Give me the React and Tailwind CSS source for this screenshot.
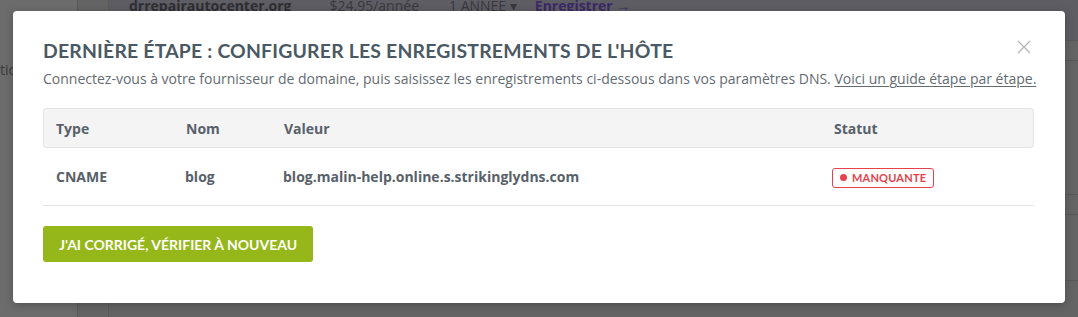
import React from "react";

export default function App() {
  return (
    <div className="relative w-[1078px] h-[317px] overflow-hidden bg-[#646464]" style={{ fontFamily: "'Open Sans', sans-serif" }}>
      {/* background page under overlay */}
      <div className="absolute inset-0 flex">
        <div className="w-[78px] h-full bg-[#6c6c6c] border-r border-[#5a5a5a] flex flex-col">
          <div className="h-[60px]"></div>
          <div className="text-[14px] text-[#3a3a3a] leading-[20px]">tic</div>
        </div>
        <div className="w-[31px] h-full bg-[#646464] border-r border-[#5a5a5a]"></div>
        <div className="flex-1 h-full flex flex-col">
          <div className="h-[40px] bg-[#5f5d64] flex items-start text-[14px] leading-[10px] overflow-hidden">
            <span className="ml-[20px] font-bold text-[#2e2e33] mt-[1px]">drrepairautocenter.org</span>
            <span className="ml-[38px] text-[#38383c] mt-[1px]">$24.95/année</span>
            <span className="ml-[30px] text-[#38383c] mt-[1px]">1 ANNÉE ▾</span>
            <span className="ml-[18px] font-bold text-[#3b2a66] mt-[1px]">Enregistrer →</span>
          </div>
          <div className="h-[21px] border-t border-[#585858] border-b"></div>
          <div className="h-[134px] border-b border-[#585858]"></div>
          <div className="h-[20px] border-b border-[#585858]"></div>
          <div className="h-[66px] border-b border-[#585858]"></div>
        </div>
      </div>

      {/* modal */}
      <div className="absolute left-[13px] top-[11px] w-[1052px] h-[292px] bg-white rounded-[4px] shadow-[0_2px_8px_rgba(0,0,0,0.25)]">
        <div className="pl-[30px] pr-[31px] pt-[25px]">
          <div className="flex items-start justify-between">
            <h2 className="text-[19.4px] leading-[30px] font-bold text-[#4b5964] tracking-[0.2px]" style={{ fontFamily: "Lato, sans-serif" }}>
              DERNIÈRE ÉTAPE : CONFIGURER LES ENREGISTREMENTS DE L'HÔTE
            </h2>
            <button className="mt-[4px] mr-[3px] w-[14px] h-[14px] text-[#b4b4b4]">
              <svg viewBox="0 0 14 14" width="14" height="14" fill="none" stroke="currentColor" strokeWidth="1.2">
                <path d="M1 1L13 13M13 1L1 13" />
              </svg>
            </button>
          </div>
          <p className="mt-[3px] text-[14px] leading-[20px] text-[#636b72] whitespace-nowrap">
            Connectez-vous à votre fournisseur de domaine, puis saisissez les enregistrements ci-dessous dans vos paramètres DNS.{" "}
            <span className="underline underline-offset-2">Voici un guide étape par étape.</span>
          </p>

          <div className="mt-[19px]">
            <div className="grid grid-cols-[142px_98px_550px_1fr] h-[40px] items-center bg-[#f4f4f4] border border-[#e4e4e4] rounded-[3px] text-[14px] font-bold text-[#58616a]">
              <div className="pl-[12px]">Type</div>
              <div>Nom</div>
              <div>Valeur</div>
              <div>Statut</div>
            </div>
            <div className="grid grid-cols-[142px_98px_550px_1fr] h-[58px] items-center border-b border-[#e2e2e2] text-[14px] font-bold text-[#58616a]">
              <div className="pl-[13px]">CNAME</div>
              <div>blog</div>
              <div>blog.malin-help.online.s.strikinglydns.com</div>
              <div>
                <span className="inline-flex items-center gap-[5px] h-[20px] px-[7px] -ml-[1px] border border-[#e5424d] rounded-[3px] text-[#e5424d] text-[11px] font-bold tracking-[0.2px]" style={{ fontFamily: "Lato, sans-serif" }}>
                  <span className="w-[7px] h-[7px] rounded-full bg-[#e5424d]"></span>
                  MANQUANTE
                </span>
              </div>
            </div>
          </div>

          <button className="mt-[20px] h-[36px] px-[16px] bg-[#95b71a] rounded-[3px] text-white text-[14px] font-bold" style={{ fontFamily: "Lato, sans-serif" }}>
            J'AI CORRIGÉ, VÉRIFIER À NOUVEAU
          </button>
        </div>
      </div>
    </div>
  );
}
